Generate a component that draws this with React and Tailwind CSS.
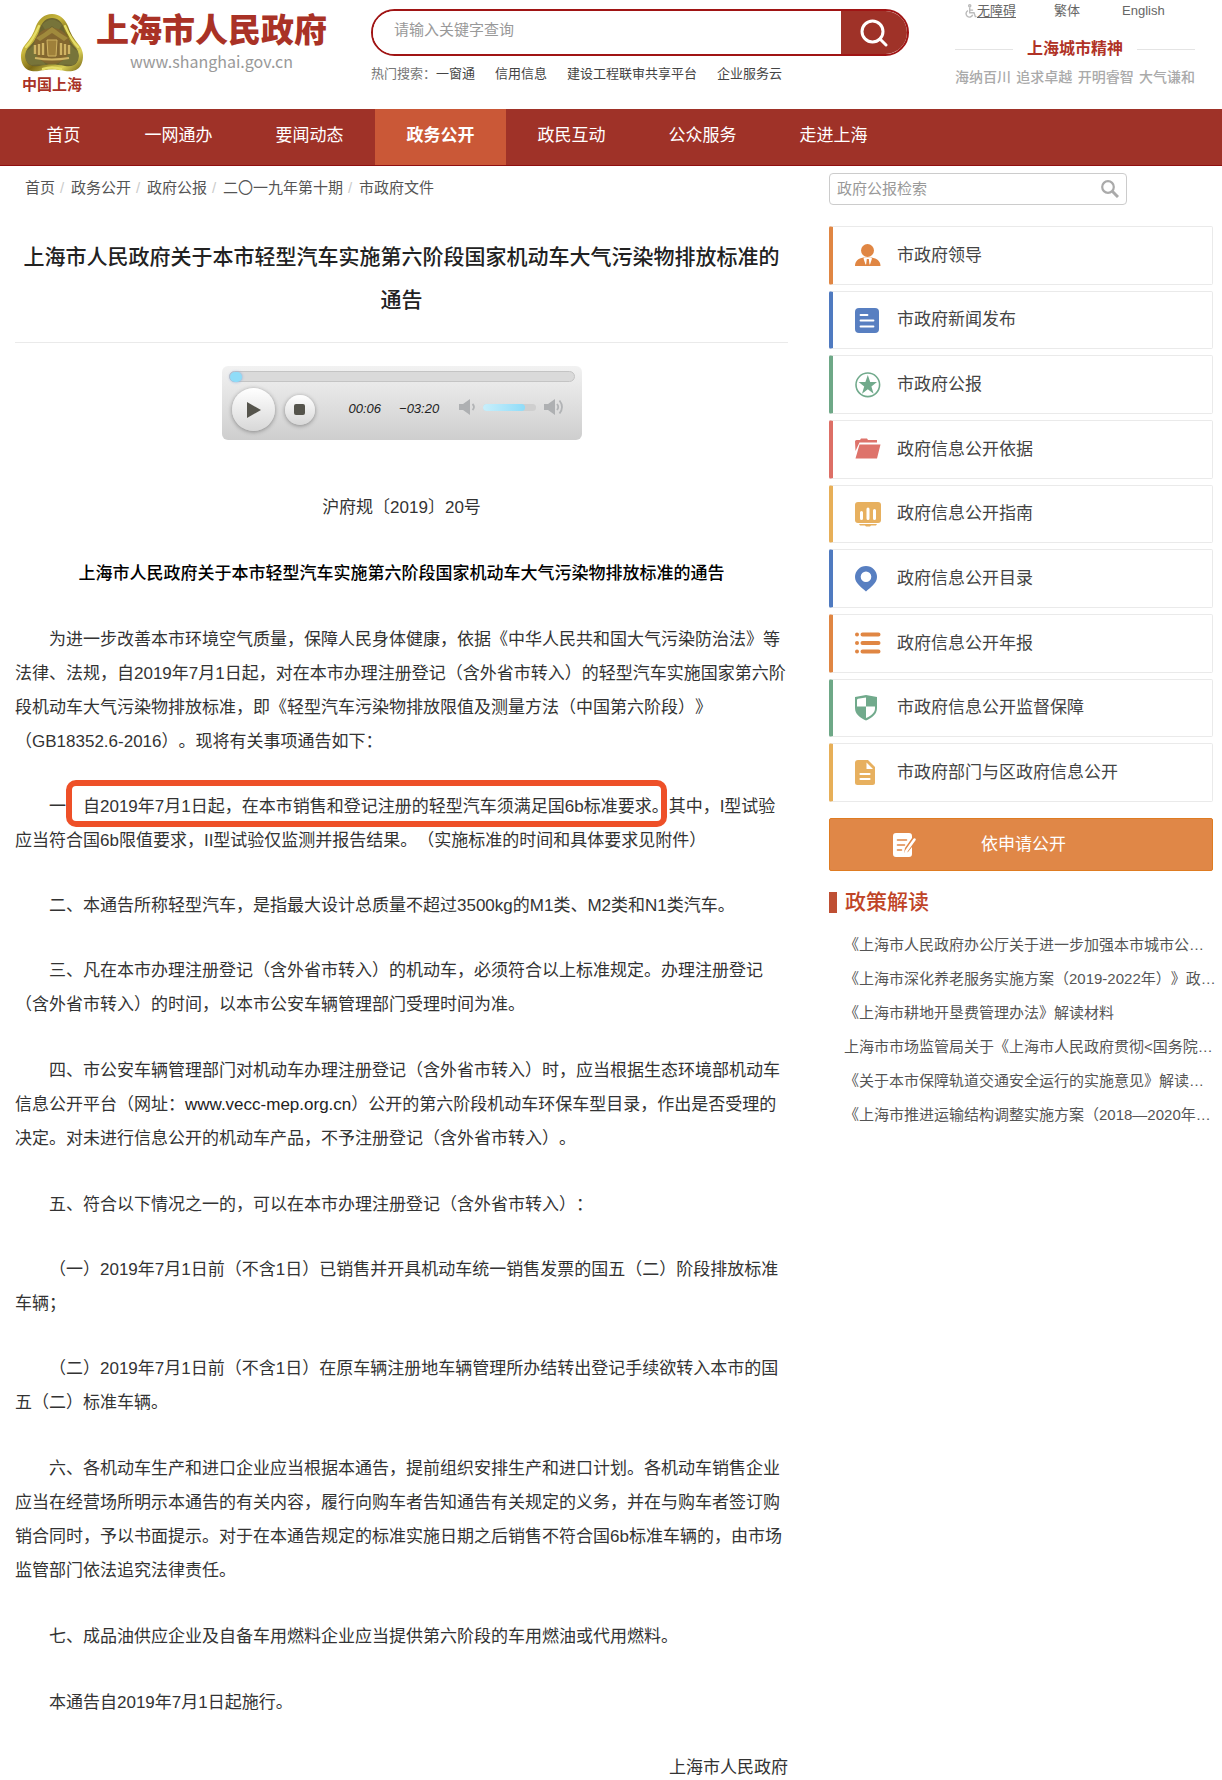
import React from "react";

const navItems = ["首页", "一网通办", "要闻动态", "政务公开", "政民互动", "公众服务", "走进上海"];
const hotLinks = ["信用信息", "建设工程联审共享平台", "企业服务云"];
const crumbs = ["首页", "政务公开", "政府公报", "二〇一九年第十期", "市政府文件"];
const spirit = ["海纳百川", "追求卓越", "开明睿智", "大气谦和"];

const policyLinks = [
  "《上海市人民政府办公厅关于进一步加强本市城市公…",
  "《上海市深化养老服务实施方案（2019-2022年）》政…",
  "《上海市耕地开垦费管理办法》解读材料",
  "上海市市场监管局关于《上海市人民政府贯彻<国务院…",
  "《关于本市保障轨道交通安全运行的实施意见》解读…",
  "《上海市推进运输结构调整实施方案（2018—2020年…",
];

function Emblem() {
  return (
    <svg viewBox="0 0 64 60" className="h-[60px] w-16" aria-hidden="true">
      <defs>
        <linearGradient id="gold" x1="0" y1="0" x2="1" y2="1">
          <stop offset="0" stopColor="#8f7d1c" />
          <stop offset="0.35" stopColor="#c9b83e" />
          <stop offset="0.55" stopColor="#7d6a17" />
          <stop offset="0.8" stopColor="#d9cf55" />
          <stop offset="1" stopColor="#6f5d12" />
        </linearGradient>
      </defs>
      <path
        d="M32 1c8 0 13 5 16 12 2 7 6 13 11 19 5 6 5 14 2 20-3 6-10 7-16 6-9-2-17-2-26 0-6 1-13 0-16-6-3-6-3-14 2-20 5-6 9-12 11-19C19 6 24 1 32 1z"
        fill="url(#gold)"
      />
      <path
        d="M32 5c6 0 10 4 12 10 2 8 6 14 12 20 3 4 3 10 1 14-2 4-7 5-12 4-9-2-17-2-26 0-5 1-10 0-12-4-2-4-2-10 1-14 6-6 10-12 12-20C22 9 26 5 32 5z"
        fill="#6c6530"
      />
      <path d="M22 12q10-11 20 0l-4 6-6-5-6 5zM6 38q6-3 9-8l3 12 8 10q-8-1-15 0-8-4-5-14zM58 38q-6-3-9-8l-3 12-8 10q8-1 15 0 8-4 5-14z" fill="#77743a" />
      <circle cx="32" cy="33" r="18" fill="#83672f" />
      <path d="M16 25l8-5 8-6 8 6 8 5-4 3-12-8-12 8z" fill="#a08a3c" />
      <g fill="#9f803a" stroke="#d0b463" strokeWidth="1">
        <path d="M15 32v9M19 31v11M23 30v12" fill="none" strokeWidth="2.400" />
        <path d="M27 27h10l-1 16h-8z" />
        <path d="M41 30v12M45 31v11M49 32v9" fill="none" strokeWidth="2.400" />
        <path d="M15 45q17 3 34 0" fill="none" strokeWidth="2" />
      </g>
      <path d="M19 13C15 22 11 29 6 34M23 56c6-2 12-2 18 0M45 13c4 9 8 16 13 21" fill="none" stroke="#e6de66" strokeWidth="2.400" strokeLinecap="round" />
    </svg>
  );
}

function SearchIcon({ className, width }) {
  return (
    <svg viewBox="0 0 28 28" className={className} fill="none" stroke="currentColor" strokeWidth={width} strokeLinecap="round" aria-hidden="true">
      <circle cx="12.500" cy="12.500" r="10.500" />
      <path d="M20 20l6 6" />
    </svg>
  );
}

function Icon({ children, color }) {
  return (
    <svg viewBox="0 0 26 26" className={"h-[26px] w-[26px] shrink-0 " + color} fill="currentColor" aria-hidden="true">
      {children}
    </svg>
  );
}

const LeaderIcon = () => (
  <Icon color="text-[#e08643]">
    <circle cx="12.500" cy="8.500" r="6.500" />
    <path d="M0 24c0-5 3-7.500 8.500-8.500h8c5.500 1 9 3.500 9 8.500z" />
    <path d="M9.500 15.500h6.500l1 1-2 6h-4.500l-2-6z" fill="#fff" />
    <path d="M11.800 17h2l.8 6.500h-3.600z" />
  </Icon>
);
const NewsIcon = () => (
  <Icon color="text-[#587fc1]">
    <rect y="1" width="24" height="25" rx="4" />
    <path d="M5.500 8h7M5.500 13.500h13M5.500 19.500h13" stroke="#fff" strokeWidth="1.800" strokeLinecap="round" />
  </Icon>
);
const StarIcon = () => (
  <Icon color="text-[#71aa8c]">
    <circle cx="12.800" cy="12.800" r="11.800" fill="none" stroke="currentColor" strokeWidth="1.600" />
    <path d="M12.800 3l2.400 7.100h6.800l-5.600 4.300 2.200 7.300-5.800-4.400-5.800 4.400 2.200-7.300L3.600 10.100h6.800z" />
  </Icon>
);
const FolderIcon = () => (
  <Icon color="text-[#de736b]">
    <path d="M0 5.500q0-1.500 1.500-1.500H5l1-1.500h6L13 4h9v2.500H4.500L.5 15z" />
    <path d="M4.500 8.500h21L22 22.500H.5z" />
  </Icon>
);
const ChartIcon = () => (
  <Icon color="text-[#e7b05f]">
    <rect y="1" width="26" height="21" rx="3" />
    <path d="M4 23h18l-1 1.500h-5l-1 1h-4l-1-1H5z" />
    <path d="M6.500 11.500v6M13 8v9.500M19.500 9.500v8" stroke="#fff" strokeWidth="3" strokeLinecap="round" />
  </Icon>
);
const PinIcon = () => (
  <Icon color="text-[#587fc1]">
    <path fillRule="evenodd" d="M11 0a11 11 0 0 1 11 11c0 6-6 10-11 14.500C6 21 0 17 0 11A11 11 0 0 1 11 0zm0 5.500a5.300 5.300 0 1 0 0 10.600 5.300 5.300 0 0 0 0-10.600z" />
  </Icon>
);
const ListIcon = () => (
  <Icon color="text-[#e08643]">
    <circle cx="2" cy="4.500" r="2" />
    <circle cx="2" cy="13" r="2" />
    <circle cx="2" cy="21.500" r="2" />
    <path d="M7.500 4.500h16M7.500 13h16M7.500 21.500h16" stroke="currentColor" strokeWidth="4" strokeLinecap="round" />
  </Icon>
);
const ShieldIcon = () => (
  <Icon color="text-[#71aa8c]">
    <path d="M11 0l11 2v11c0 6-5 10-11 12.500C5 23 0 19 0 13V2z" />
    <path d="M11 2.500v9H2V5q0-1 1-1.200zM11 11.500h9v2c0 4-4 7.500-9 9.500z" fill="#fff" />
  </Icon>
);
const DocIcon = () => (
  <Icon color="text-[#e7b05f]">
    <path d="M3 0h10l7 7v15.500q0 2.500-2.500 2.500h-15Q0 25 0 22.500V3q0-3 3-3z" />
    <path d="M11.500 2.500v6.500h6.500z" fill="#fff" />
    <path d="M5.500 14h9M5.500 19h9" stroke="#fff" strokeWidth="2.200" strokeLinecap="round" />
  </Icon>
);

const services = [
  ["市政府领导", LeaderIcon, "border-l-[#e08643]"],
  ["市政府新闻发布", NewsIcon, "border-l-[#4f7ac0]"],
  ["市政府公报", StarIcon, "border-l-[#6ea887]"],
  ["政府信息公开依据", FolderIcon, "border-l-[#dd6f66]"],
  ["政府信息公开指南", ChartIcon, "border-l-[#e7af58]"],
  ["政府信息公开目录", PinIcon, "border-l-[#4f7ac0]"],
  ["政府信息公开年报", ListIcon, "border-l-[#e08643]"],
  ["市政府信息公开监督保障", ShieldIcon, "border-l-[#6ea887]"],
  ["市政府部门与区政府信息公开", DocIcon, "border-l-[#e7af58]"],
];

function Header() {
  return (
    <header className="flex h-[109px] items-start pl-5">
      <a href="#home" className="flex items-start">
        <span className="flex w-16 flex-col items-center pt-[13px]">
          <Emblem />
          <span className="text-[15px] leading-6 font-bold whitespace-nowrap text-[#a93226]">中国上海</span>
        </span>
        <span className="ml-3 flex flex-col items-center pt-[13px]">
          <span className="text-[33px] leading-9 font-black whitespace-nowrap text-[#a93226]">上海市人民政府</span>
          <span className="font-['Noto_Sans_CJK_SC',sans-serif] text-base leading-6 text-[#999]">www.shanghai.gov.cn</span>
        </span>
      </a>

      <div className="ml-11 flex-1 pt-[9px]">
        <form className="flex h-[47px] overflow-hidden rounded-full border-2 border-[#a01414]" onSubmit={(e) => e.preventDefault()}>
          <input
            type="search"
            aria-label="请输入关键字查询"
            placeholder="请输入关键字查询"
            className="min-w-0 flex-1 bg-white pb-1 pl-[21px] text-[15px] outline-none placeholder:text-[#999]"
          />
          <button type="submit" aria-label="搜索" className="flex w-[66px] items-center justify-center bg-[#9f3228] text-white">
            <SearchIcon className="h-7 w-7" width="3" />
          </button>
        </form>
        <div className="mt-2 flex gap-5 text-[13px] leading-5 whitespace-nowrap text-[#444]">
          <span>
            <span className="text-[#777]">热门搜索：</span>
            <a href="#hot">一窗通</a>
          </span>
          {hotLinks.map((t) => (
            <a key={t} href="#hot">{t}</a>
          ))}
        </div>
      </div>

      <div className="mr-[27px] ml-[46px] w-60">
        <div className="flex pl-[10px] text-[13px] leading-[22px] text-[#666]">
          <a href="#access" className="flex items-center">
            <svg viewBox="0 0 14 16" className="h-[14px] w-3" fill="none" stroke="#bbb" strokeWidth="1.600" aria-hidden="true">
              <circle cx="5.500" cy="2" r="1.300" />
              <path d="M5.500 4v6h5l1.500 4.500h1.500M5.500 7h4M3.500 7.500a4 4 0 1 0 5.500 5" />
            </svg>
            <span className="underline underline-offset-2">无障碍</span>
          </a>
          <a href="#trad" className="ml-[38px]">繁体</a>
          <a href="#en" className="ml-[42px]">English</a>
        </div>
        <div className="mt-[15px] flex items-center justify-between">
          <span className="h-px w-[58px] bg-[#e4e4e4]" />
          <span className="text-base leading-6 font-bold text-[#b03226]">上海城市精神</span>
          <span className="h-px w-[58px] bg-[#e4e4e4]" />
        </div>
        <div className="mt-1 flex justify-between text-sm leading-6 font-medium text-[#aaa]">
          {spirit.map((t) => (
            <span key={t}>{t}</span>
          ))}
        </div>
      </div>
    </header>
  );
}

function Nav() {
  return (
    <nav className="flex h-[57px] border-b border-[#8f0f0f] bg-[#9f3228] pl-[14px] text-[17px] text-white">
      {navItems.map((t, i) => (
        <a
          key={t}
          href="#nav"
          className={
            "flex items-center justify-center pb-[2px] " +
            (i === 0 ? "w-[99px] " : "w-[131px] ") +
            (i === 3 ? "bg-[#ca5837] font-bold" : "")
          }
        >
          {t}
        </a>
      ))}
    </nav>
  );
}

function Speaker({ loud }) {
  return (
    <svg viewBox="0 0 20 16" className="h-4 w-5" aria-hidden="true">
      <path d="M0 5h4l7-5v16l-7-5H0z" fill="#aeb0b2" />
      <path d={loud ? "M13 5q2.500 3 0 6M15.500 1.500q5 6.500 0 13" : "M13.500 5q3 3 0 6"} fill="none" stroke="#b2b4b6" strokeWidth="1.800" />
    </svg>
  );
}

function Player() {
  return (
    <div className="mx-auto mt-[23px] h-[74px] w-[360px] rounded-md bg-linear-to-b from-[#f2f2f2] to-[#cecece] px-[7px] pt-[5px]">
      <div className="h-[11px] rounded-full border border-[#c4c4c4] bg-[#dadada]">
        <div className="h-[10px] w-3 rounded-full bg-[#8fdcf8] shadow-[0_0_3px_#8aa8d8]" />
      </div>
      <div className="flex items-center pl-[3px] pt-[6px]">
        <button type="button" aria-label="播放" className="flex h-[43px] w-[43px] items-center justify-center rounded-full bg-linear-to-b from-white to-[#d8d8d8] shadow-[0_1px_4px_#888]">
          <svg viewBox="0 0 14 16" className="ml-[2px] h-4 w-[14px]" aria-hidden="true">
            <path d="M0 0l14 8-14 8z" fill="#55544c" />
          </svg>
        </button>
        <button type="button" aria-label="停止" className="ml-[10px] flex h-[30px] w-[30px] items-center justify-center rounded-full bg-linear-to-b from-white to-[#d8d8d8] shadow-[0_1px_4px_#888]">
          <span className="h-[11px] w-[11px] rounded-xs bg-[#55544c]" />
        </button>
        <span className="ml-[34px] pb-[2px] text-[13px] leading-4 text-[#222] italic">00:06</span>
        <span className="ml-[18px] pb-[2px] text-[13px] leading-4 text-[#222] italic">−03:20</span>
        <span className="ml-5 flex items-center gap-1 pb-[5px]">
          <Speaker />
          <span className="flex h-[7px] w-[53px] rounded-full bg-[#cfcfcf]">
            <span className="w-[42px] rounded-full bg-linear-to-r from-[#c8effb] to-[#8fdcf8]" />
          </span>
          <span className="ml-1 flex">
            <Speaker loud />
          </span>
        </span>
      </div>
    </div>
  );
}

function Article() {
  return (
    <main>
      <nav aria-label="面包屑" className="mt-[10px] flex pl-[10px] text-[15px] leading-6 text-[#555]">
        {crumbs.map((t, i) => (
          <span key={t} className="flex">
            {i > 0 && <span className="w-4 pl-[5px] text-[#ccc]">/</span>}
            <a href="#crumb">{t}</a>
          </span>
        ))}
      </nav>
      <h1 className="mt-[35px] border-b border-[#eaeaea] pb-[21px] text-center text-[21px] leading-[43px] font-medium text-[#222]">
        上海市人民政府关于本市轻型汽车实施第六阶段国家机动车大气污染物排放标准的通告
      </h1>
      <Player />
      <div className="mt-[51px] text-[17px] leading-[34px] text-[#333]">
        <div className="flex flex-col gap-8">
          <p className="text-center">沪府规〔2019〕20号</p>
          <h2 className="text-center font-medium text-black">
            上海市人民政府关于本市轻型汽车实施第六阶段国家机动车大气污染物排放标准的通告
          </h2>
          <p className="indent-[34px]">
            为进一步改善本市环境空气质量，保障人民身体健康，依据《中华人民共和国大气污染防治法》等法律、法规，自2019年7月1日起，对在本市办理注册登记（含外省市转入）的轻型汽车实施国家第六阶段机动车大气污染物排放标准，即《轻型汽车污染物排放限值及测量方法（中国第六阶段）》（GB18352.6-2016）。现将有关事项通告如下：
          </p>
        </div>
        <div className="mt-[31px] flex flex-col gap-[31px]">
          <p className="indent-[34px]">
            一、
            <mark className="relative bg-transparent text-inherit">
              自2019年7月1日起，在本市销售和登记注册的轻型汽车须满足国6b标准要求。
              <span className="absolute -top-[17px] right-[2px] -bottom-[11px] -left-[17px] rounded-[10px] border-6 border-[#ee5028]" />
            </mark>
            其中，I型试验应当符合国6b限值要求，II型试验仅监测并报告结果。（实施标准的时间和具体要求见附件）
          </p>
          <p className="indent-[34px]">二、本通告所称轻型汽车，是指最大设计总质量不超过3500kg的M1类、M2类和N1类汽车。</p>
          <p className="indent-[34px]">
            三、凡在本市办理注册登记（含外省市转入）的机动车，必须符合以上标准规定。办理注册登记（含外省市转入）的时间，以本市公安车辆管理部门受理时间为准。
          </p>
        </div>
        <div className="mt-8 flex flex-col gap-8">
          <p className="indent-[34px]">
            四、市公安车辆管理部门对机动车办理注册登记（含外省市转入）时，应当根据生态环境部机动车信息公开平台（网址：<a href="#vecc" className="text-[#222]">www.vecc-mep.org.cn</a>）公开的第六阶段机动车环保车型目录，作出是否受理的决定。对未进行信息公开的机动车产品，不予注册登记（含外省市转入）。
          </p>
          <p className="indent-[34px]">五、符合以下情况之一的，可以在本市办理注册登记（含外省市转入）：</p>
        </div>
        <div className="mt-[31px] flex flex-col gap-[31px]">
          <p className="indent-[34px]">（一）2019年7月1日前（不含1日）已销售并开具机动车统一销售发票的国五（二）阶段排放标准车辆；</p>
          <p className="indent-[34px]">（二）2019年7月1日前（不含1日）在原车辆注册地车辆管理所办结转出登记手续欲转入本市的国五（二）标准车辆。</p>
        </div>
        <div className="mt-8 flex flex-col gap-8">
          <p className="indent-[34px]">
            六、各机动车生产和进口企业应当根据本通告，提前组织安排生产和进口计划。各机动车销售企业应当在经营场所明示本通告的有关内容，履行向购车者告知通告有关规定的义务，并在与购车者签订购销合同时，予以书面提示。对于在本通告规定的标准实施日期之后销售不符合国6b标准车辆的，由市场监管部门依法追究法律责任。
          </p>
          <p className="indent-[34px]">七、成品油供应企业及自备车用燃料企业应当提供第六阶段的车用燃油或代用燃料。</p>
          <p className="indent-[34px]">本通告自2019年7月1日起施行。</p>
        </div>
        <p className="mt-9 text-right leading-6">上海市人民政府</p>
      </div>
    </main>
  );
}

function Sidebar() {
  return (
    <aside>
      <form className="mt-[7px] flex h-8 w-[298px] items-center rounded border border-[#ccc] pr-[7px]" onSubmit={(e) => e.preventDefault()}>
        <input
          type="search"
          aria-label="政府公报检索"
          placeholder="政府公报检索"
          className="min-w-0 flex-1 pl-[7px] text-[15px] outline-none placeholder:text-[#999]"
        />
        <button type="submit" aria-label="检索" className="text-[#aaa]">
          <svg viewBox="0 0 18 18" className="h-[18px] w-[18px]" fill="none" stroke="currentColor" aria-hidden="true">
            <circle cx="7" cy="7" r="5.800" strokeWidth="2.200" />
            <path d="M11.500 11.500l5.500 5.500" strokeWidth="3" />
          </svg>
        </button>
      </form>

      <ul className="mt-[21px] grid h-[576px] grid-rows-9 gap-[6px]">
        {services.map(([label, Glyph, edge]) => (
          <li key={label} className="grid">
            <a href="#service" className={"flex items-center gap-4 rounded-xs border border-l-4 border-[#eaeaea] pl-[22px] text-[17px] text-[#444] " + edge}>
              <Glyph />
              <span>{label}</span>
            </a>
          </li>
        ))}
      </ul>

      <a href="#apply" className="mt-4 flex h-[53px] items-center rounded-xs border border-[#df7c22] bg-[#e08747] pl-[63px] text-[17px] text-white">
        <svg viewBox="0 0 24 26" className="h-[26px] w-6" aria-hidden="true">
          <path d="M3 1h13q3 0 3 3v2l-7 10-1 5 4-1 4-5v7q0 3-3 3H3q-3 0-3-3V4q0-3 3-3z" fill="#fff" />
          <path d="M4.500 8h9M4.500 13h7M4.500 18h4" stroke="#e08747" strokeWidth="1.600" strokeLinecap="round" />
          <path d="M21.500 7.500L14 18l-1.500 2.500" stroke="#fff" strokeWidth="2.600" strokeLinecap="round" />
        </svg>
        <span className="ml-16">依申请公开</span>
      </a>

      <h2 className="mt-4 flex items-center gap-2 text-[21px] leading-[30px] font-medium text-[#bf4427]">
        <span className="h-[21px] w-2 bg-[#bf4f33]" />
        政策解读
      </h2>
      <ul className="mt-[11px] pl-[15px] text-[15px] leading-[34px] whitespace-nowrap text-[#555]">
        {policyLinks.map((t) => (
          <li key={t}>
            <a href="#policy">{t}</a>
          </li>
        ))}
      </ul>
    </aside>
  );
}

export default function App() {
  return (
    <div
      lang="zh-CN"
      className="bg-white font-['Liberation_Sans','Noto_Sans_CJK_SC',sans-serif] [text-spacing-trim:space-all]"
    >
      <Header />
      <Nav />
      <div className="grid grid-cols-[minmax(0,773fr)_minmax(0,384fr)] gap-[41px] pr-[9px] pl-[15px]">
        <Article />
        <Sidebar />
      </div>
    </div>
  );
}
